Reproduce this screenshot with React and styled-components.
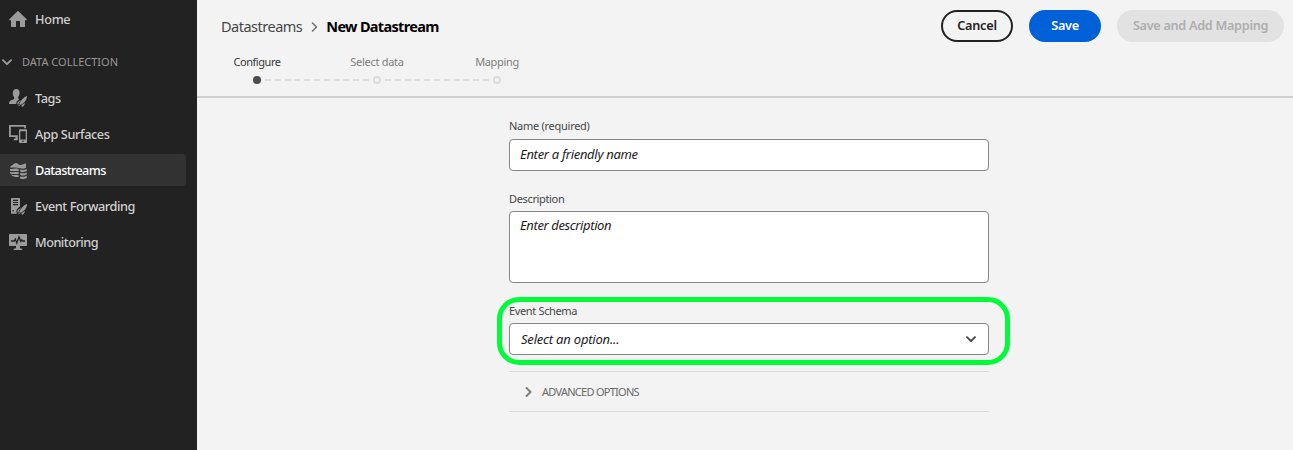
import React from "react";
import styled, { createGlobalStyle } from "styled-components";

const GlobalStyle = createGlobalStyle`
  *, *::before, *::after { box-sizing: border-box; }
  body { margin: 0; background: #f3f3f3; font-family: "Noto Sans", "Open Sans", sans-serif; }
`;

const Shell = styled.div`
  display: flex;
  width: 100%;
  height: 450px;
  overflow: hidden;
  background: #f3f3f3;
`;

const Sidebar = styled.nav`
  display: flex;
  flex-direction: column;
  flex: none;
  gap: 4px;
  width: 197px;
  padding-top: 3px;
  background: #222222;
`;

const NavItem = styled.a`
  display: flex;
  align-items: center;
  gap: 8px;
  width: 186px;
  height: 32px;
  padding-left: 9px;
  border-radius: 0 4px 4px 0;
  background: ${(p) => (p.$active ? "#323232" : "transparent")};
  color: ${(p) => (p.$active ? "#ffffff" : "#d0d0d0")};
  font-size: 12.7px;
  font-weight: 500;
  line-height: 18px;
  white-space: nowrap;
  svg { flex: none; color: #9b9b9b; }
`;

const GroupTitle = styled.div`
  display: flex;
  align-items: center;
  gap: 10px;
  height: 32px;
  margin-top: 7px;
  padding-left: 2px;
  color: #989898;
  font-size: 11px;
  line-height: 16px;
  white-space: nowrap;
`;

const Label = styled.span`
  letter-spacing: ${(p) => p.$track || 0}px;
  white-space: nowrap;
`;

const Main = styled.main`
  display: flex;
  flex-direction: column;
  flex: 1;
  min-width: 0;
`;

const Header = styled.header`
  display: flex;
  justify-content: space-between;
  align-items: flex-start;
  height: 98px;
  padding: 10px 9px 0 24px;
  border-bottom: 2px solid #cfcfcf;
`;

const HeaderInfo = styled.div`
  display: flex;
  flex-direction: column;
  padding-top: 5px;
`;

const Breadcrumbs = styled.div`
  display: flex;
  align-items: center;
  height: 22px;
  color: #464646;
  font-size: 14.5px;
  line-height: 22px;
  svg { margin: 1px 8px 0 9px; }
`;

const Current = styled(Label)`
  color: #000000;
  font-weight: 700;
`;

const Steps = styled.div`
  display: flex;
  margin-top: 17px;
  margin-left: -24px;
`;

const Step = styled.div`
  display: flex;
  flex-direction: column;
  align-items: center;
  width: 120px;
  color: ${(p) => (p.$active ? "#383838" : "#7d7d7d")};
  font-size: 11px;
  line-height: 16px;
`;

const Track = styled.div`
  display: flex;
  align-items: center;
  justify-content: center;
  width: 120px;
  height: 8px;
  margin-top: 6px;
`;

const Dashes = styled.span`
  flex: 1;
  height: 2px;
  background: ${(p) =>
    p.$hidden
      ? "none"
      : `repeating-linear-gradient(to right, #dedede 0 6px, transparent 6px 9.8px) ${p.$offset}px 0`};
  margin: ${(p) => (p.$offset ? "0 4px 0 0" : "0 0 0 4px")};
`;

const Dot = styled.span`
  width: 8px;
  height: 8px;
  border-radius: 50%;
  border: ${(p) => (p.$active ? "none" : "2px solid #dcdcdc")};
  background: ${(p) => (p.$active ? "#4b4b4b" : "transparent")};
`;

const Actions = styled.div`
  display: flex;
  gap: 16px;
`;

const palette = {
  outline: "background: transparent; color: #222222; border-color: #222222;",
  primary: "background: #0060d8; color: #ffffff; border-color: #0060d8;",
  disabled: "background: #e2e2e2; color: #aeaeae; border-color: #e2e2e2;",
};

const Button = styled.button`
  display: flex;
  align-items: center;
  justify-content: center;
  width: ${(p) => p.$width}px;
  height: 32px;
  padding: 0 0 2px;
  border: 2px solid;
  border-radius: 16px;
  font-family: inherit;
  font-size: 12.7px;
  font-weight: 600;
  ${(p) => palette[p.$kind]}
`;

const Form = styled.form`
  display: flex;
  flex-direction: column;
  width: 480px;
  margin-left: 312px;
  padding-top: 18px;
`;

const Field = styled.div`
  position: relative;
  display: flex;
  flex-direction: column;
  gap: ${(p) => p.$gap || 4}px;
  margin-bottom: ${(p) => p.$after}px;
`;

const FieldLabel = styled(Label)`
  height: 19px;
  color: #464646;
  font-size: 11px;
  line-height: ${(p) => p.$line || 20}px;
`;

const Control = styled.div`
  display: flex;
  justify-content: space-between;
  align-items: flex-start;
  height: ${(p) => p.$height}px;
  padding: ${(p) => p.$top || 4}px 12px 0 ${(p) => p.$inset || 10}px;
  border: 1px solid #868686;
  border-radius: 4px;
  background: #ffffff;
  color: #1c1c1c;
  font-size: 13px;
  font-style: italic;
  line-height: 20px;
  svg { margin-top: 7px; }
`;

const Highlight = styled.div`
  position: absolute;
  top: -5px;
  left: -12px;
  width: 513px;
  height: 68px;
  border: 5px solid #00fc38;
  border-radius: 22px;
  pointer-events: none;
`;

const Accordion = styled.div`
  display: flex;
  align-items: center;
  gap: 10px;
  height: 41px;
  padding-left: 16px;
  border-top: 1px solid #dadada;
  border-bottom: 1px solid #dadada;
  color: #6a6a6a;
  font-size: 11px;
`;

const ChevronDown = ({ color }) => (
  <svg width="10" height="7" viewBox="0 0 10 7" fill="none" stroke={color} strokeWidth="1.9" strokeLinecap="round" strokeLinejoin="round">
    <path d="M1 1.200 5 5.200 9 1.200" />
  </svg>
);

const ChevronRight = ({ color, width = 7, height = 10, stroke = 2 }) => (
  <svg width={width} height={height} viewBox="0 0 7 10" fill="none" stroke={color} strokeWidth={stroke} strokeLinecap="round" strokeLinejoin="round">
    <path d="M1.500 1 5.500 5 1.500 9" />
  </svg>
);

const Icon = ({ children }) => (
  <svg width="18" height="18" viewBox="0 0 18 18" fill="currentColor">
    {children}
  </svg>
);

const Rocket = () => (
  <g>
    <path d="M18 6.900c.1 2.700-1.300 5.200-3.600 7.200l-2.600 1.900-1.500-1.400 1.500-2.500c1.600-2.500 3.600-4.500 6.200-5.200z" />
    <path d="M11.700 11.200 9.900 13.800 9.100 16.300 8.200 14.600c.5-1.700 1.700-3 3.500-3.400z" />
    <path d="M15.800 13.700c.2 1.700-.9 3.200-2.800 4.300l-.6-1.500z" />
    <path d="M10.300 15.300 11.200 16.200 9.200 17.400z" />
  </g>
);

const HomeIcon = () => (
  <Icon>
    <path d="M17.700 9.300 9.500 1.200a.7.7 0 0 0-1 0L.3 9.300c-.4.4-.1 1 .4 1H2v6.200c0 .3.200.5.500.5H7v-5.500c0-.3.200-.5.500-.5h3c.3 0 .5.200.5.500V17h4.500c.3 0 .5-.2.500-.5v-6.200h1.300c.5 0 .8-.6.400-1z" />
  </Icon>
);

const TagsIcon = () => (
  <Icon>
    <path d="M7.200 0c2.200 0 3.500 1.600 3.400 4-.1 1.900-.6 3-1.400 4.100-.4.700-.1 1.500.5 1.900l.5.300C8.500 11.600 7.300 13 7.200 15H0c0-2.600 1-3.600 4.200-4.500 1-.3 1.300-1.500.7-2.400C4.200 7.200 3.800 5.900 3.800 4.100 3.800 1.700 5 0 7.200 0z" />
    <Rocket />
  </Icon>
);

const SurfacesIcon = () => (
  <Icon>
    <path d="M.7 0h15.600c.4 0 .7.300.7.700V3.200h-1.800V1.800H1.800v8.500H8.800v4.900H4.500c0-1.200.8-1.700 2-1.900V12.100H.7c-.4 0-.7-.3-.7-.7V.7C0 .3.300 0 .7 0z" />
    <path fillRule="evenodd" d="M11 4.200h6c.6 0 1 .4 1 1v11.800c0 .6-.4 1-1 1h-6c-.6 0-1-.4-1-1V5.200c0-.6.4-1 1-1zm.3 2v8.400h5.400V6.200zm2.700 9.300a.8.8 0 1 0 0 1.600.8.8 0 0 0 0-1.600z" />
  </Icon>
);

const StreamsIcon = () => (
  <Icon>
    <path d="M1.500 5.200C3.500 4.700 4.700 2 7 2c1.700 0 2.500 2 4.200 2 2.300 0 4-1.300 5.800-1.500v4.300c-1.700 1.100-3.700 1.300-6 .5-2.700-1.200-5.700-1-9.500-.6z" />
    <path d="M1 8c3.300.3 5.300-1.200 8.700 0v2.300C6.500 9.400 4.200 10.500 1 9.700z" />
    <path d="M1 10.900c3.300.7 5.500-.4 8.700.4v1.800c-3.200-.6-6 .5-8.700-.6z" />
    <path d="M2 13.700c3 .7 5 0 7.700.5V16c-3.200.1-6-.3-7.700-2.300z" />
    <path d="M11.200 8.500c2.200.7 4.300.5 6.600-.6v2.200c-2.200 1.200-4.400 1.300-6.600.5z" />
    <path d="M11.200 11.800c2.200.8 4.400.7 6.600-.4v2.200c-2.200 1.100-4.400 1.200-6.600.4z" />
    <path d="M11.200 15.200c2.200.8 4.400.7 6.600-.4v2c-1.500 1.400-5.100 1.600-6.600.6z" />
  </Icon>
);

const ForwardIcon = () => (
  <Icon>
    <path fillRule="evenodd" d="M3 1h7c.6 0 1 .4 1 1v7.600c-1.900 1-3.200 2.700-3.700 4.800L8 16.700H3c-.6 0-1-.4-1-1V2c0-.6.4-1 1-1zm1 1.800V4h5V2.800zm0 2.100v1.200h5V4.900zm0 2.100v1.200h5V7z" />
    <circle cx="4.200" cy="13.800" r=".8" fill="#222222" />
    <Rocket />
  </Icon>
);

const MonitorIcon = () => (
  <Icon>
    <path d="M.7 1h16.600c.4 0 .7.3.7.7v10.600c0 .4-.3.700-.7.700H11v2.200c1.600.1 2.500.7 2.500 1.800h-9c0-1.100.9-1.700 2.500-1.800V13H.7c-.4 0-.7-.3-.7-.7V1.700C0 1.300.3 1 .7 1z" />
    <path d="M2 8h3.300l1-2 1.500 4L10 3.800l1.700 4.500 1.100-1.500.8 1.200H16" fill="none" stroke="#222222" strokeWidth="1.300" />
  </Icon>
);

const navItems = [
  { text: "Tags", icon: TagsIcon, track: -0.45 },
  { text: "App Surfaces", icon: SurfacesIcon, track: -0.38 },
  { text: "Datastreams", icon: StreamsIcon, track: -0.62, active: true },
  { text: "Event Forwarding", icon: ForwardIcon, track: -0.42 },
  { text: "Monitoring", icon: MonitorIcon, track: -0.5 },
];

const steps = [
  { text: "Configure", track: -0.45 },
  { text: "Select data", track: -0.28 },
  { text: "Mapping", track: -0.35 },
];

export default function App() {
  return (
    <Shell>
      <GlobalStyle />
      <Sidebar>
        <NavItem>
          <HomeIcon />
          <Label $track={-0.3}>Home</Label>
        </NavItem>
        <GroupTitle>
          <ChevronDown color="#9b9b9b" />
          <Label $track={0}>DATA COLLECTION</Label>
        </GroupTitle>
        {navItems.map(({ text, icon: NavIcon, track, active }) => (
          <NavItem key={text} $active={active}>
            <NavIcon />
            <Label $track={track}>{text}</Label>
          </NavItem>
        ))}
      </Sidebar>
      <Main>
        <Header>
          <HeaderInfo>
            <Breadcrumbs>
              <Label $track={-0.5}>Datastreams</Label>
              <ChevronRight color="#6e6e6e" stroke={1.5} />
              <Current $track={-0.68}>New Datastream</Current>
            </Breadcrumbs>
            <Steps>
              {steps.map(({ text, track }, i) => (
                <Step key={text} $active={i === 0}>
                  <Label $track={track}>{text}</Label>
                  <Track>
                    <Dashes $hidden={i === 0} $offset={-3} />
                    <Dot $active={i === 0} />
                    <Dashes $hidden={i === steps.length - 1} $offset={0} />
                  </Track>
                </Step>
              ))}
            </Steps>
          </HeaderInfo>
          <Actions>
            <Button type="button" $kind="outline" $width={72}>
              <Label $track={-0.25}>Cancel</Label>
            </Button>
            <Button type="button" $kind="primary" $width={72}>
              <Label $track={-0.3}>Save</Label>
            </Button>
            <Button type="button" $kind="disabled" $width={167}>
              <Label $track={-0.3}>Save and Add Mapping</Label>
            </Button>
          </Actions>
        </Header>
        <Form>
          <Field $after={18}>
            <FieldLabel $track={-0.27}>Name (required)</FieldLabel>
            <Control $height={32}>
              <Label $track={-0.3}>Enter a friendly name</Label>
            </Control>
          </Field>
          <Field $gap={3} $after={19}>
            <FieldLabel $track={-0.35}>Description</FieldLabel>
            <Control $height={72} $top={3.4}>
              <Label $track={-0.38}>Enter description</Label>
            </Control>
          </Field>
          <Field $gap={2} $after={16}>
            <FieldLabel $track={-0.35} $line={18}>Event Schema</FieldLabel>
            <Control $height={32} $inset={11} $top={5}>
              <Label $track={-0.2}>Select an option...</Label>
              <ChevronDown color="#464646" />
            </Control>
            <Highlight />
          </Field>
          <Accordion>
            <ChevronRight color="#808080" />
            <Label $track={-0.73}>ADVANCED OPTIONS</Label>
          </Accordion>
        </Form>
      </Main>
    </Shell>
  );
}
